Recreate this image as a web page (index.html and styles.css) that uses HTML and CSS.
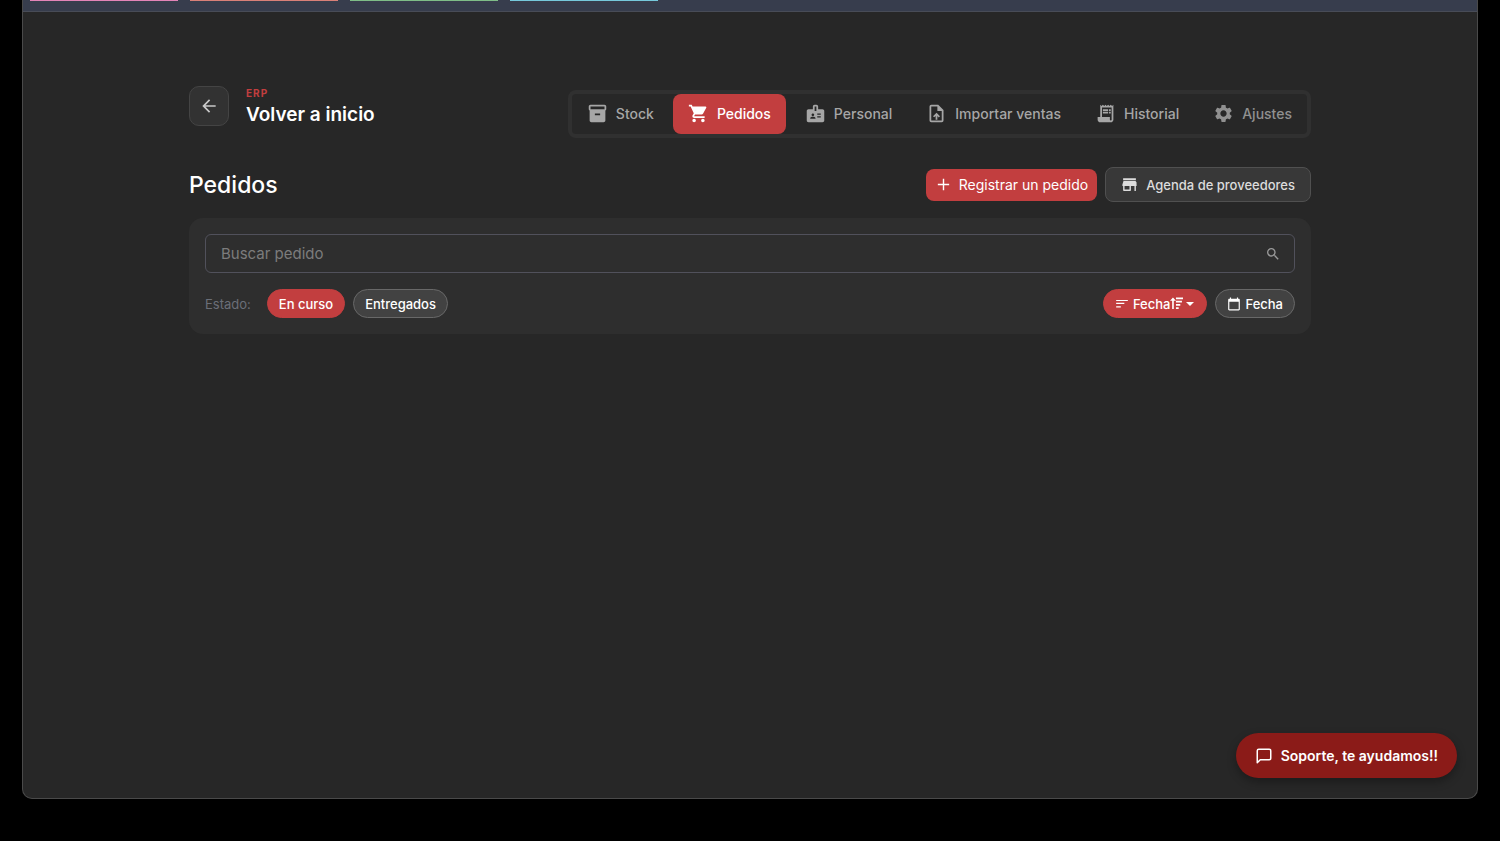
FILE: index.html
```html
<!DOCTYPE html>
<html lang="es">
  <head>
    <meta charset="UTF-8" />
    <meta name="viewport" content="width=device-width, initial-scale=1.0" />
    <title>Pedidos</title>
    <link rel="stylesheet" href="styles.css">
  </head>
  <body>
    <div class="window">
      <div class="topbar">
        <div class="tab pink"></div>
        <div class="tab orange"></div>
        <div class="tab green"></div>
        <div class="tab blue"></div>
      </div>

      <main class="container">
        <header class="header">
          <div class="back">
            <button class="back-btn" type="button" aria-label="Volver a inicio">
              <svg viewBox="0 0 24 24"><path d="M20 11H7.8l5.6-5.6L12 4l-8 8 8 8 1.4-1.4L7.8 13H20z" /></svg>
            </button>
            <div>
              <p class="label">ERP</p>
              <h2 class="back-title">Volver a inicio</h2>
            </div>
          </div>

          <nav class="nav">
            <a href="#stock">
              <svg viewBox="0 0 24 24"><path d="M20 2H4c-1 0-2 .9-2 2v3.01c0 .72.43 1.34 1 1.69V20c0 1.1 1.1 2 2 2h14c.9 0 2-.9 2-2V8.700c.57-.35 1-.97 1-1.690V4c0-1.100-1-2-2-2zm-5 12H9v-2h6v2zm5-7H4V4h16v3z" /></svg>
              Stock
            </a>
            <a href="#pedidos" class="active">
              <svg viewBox="0 0 24 24"><path d="M7 18c-1.100 0-1.990.9-1.990 2S5.900 22 7 22s2-.9 2-2-.9-2-2-2zM1 2v2h2l3.600 7.590-1.350 2.450c-.16.280-.25.610-.25.960 0 1.100.9 2 2 2h12v-2H7.420c-.14 0-.25-.11-.25-.25l.03-.12.9-1.630h7.450c.75 0 1.410-.41 1.750-1.030l3.580-6.490c.08-.14.120-.31.120-.48 0-.55-.45-1-1-1H5.210l-.94-2H1zm16 16c-1.100 0-1.990.9-1.990 2s.89 2 1.990 2 2-.9 2-2-.9-2-2-2z" /></svg>
              Pedidos
            </a>
            <a href="#personal">
              <svg viewBox="0 0 24 24"><path fill-rule="evenodd" d="M20 7h-5V4c0-1.100-.9-2-2-2h-2c-1.100 0-2 .9-2 2v3H4c-1.100 0-2 .9-2 2v11c0 1.100.9 2 2 2h16c1.100 0 2-.9 2-2V9c0-1.100-.9-2-2-2zM9 12c.83 0 1.500.67 1.500 1.500S9.830 15 9 15s-1.500-.67-1.500-1.500S8.170 12 9 12zm3 6H6v-.75c0-1 2-1.500 3-1.500s3 .5 3 1.500V18zm1-9h-2V4h2v5zm5 7.500h-4V15h4v1.500zm0-3h-4V12h4v1.500z" /></svg>
              Personal
            </a>
            <a href="#importar">
              <svg viewBox="0 0 24 24"><path fill-rule="evenodd" d="M14 2H6a2 2 0 0 0-2 2v16a2 2 0 0 0 2 2h12a2 2 0 0 0 2-2V8zM18 20H6V4h7v5h5zM8 15.010l1.410 1.410L11 14.840V19h2v-4.160l1.590 1.590L16 15.010 12.010 11z" /></svg>
              Importar ventas
            </a>
            <a href="#historial">
              <svg viewBox="0 0 24 24"><path fill-rule="evenodd" d="M19.500 3.500 18 2l-1.500 1.500L15 2l-1.500 1.500L12 2l-1.500 1.500L9 2 7.500 3.500 6 2v14H3v3c0 1.660 1.340 3 3 3h12c1.660 0 3-1.340 3-3V2zM19 19c0 .55-.45 1-1 1s-1-.45-1-1v-3H8V5h11zM9 7h6v2H9zM16 7h2v2h-2zM9 10h6v2H9zM16 10h2v2h-2z" /></svg>
              Historial
            </a>
            <a href="#ajustes" class="dim">
              <svg viewBox="0 0 24 24"><path d="M19.140 12.940c.04-.3.060-.61.060-.94 0-.32-.02-.64-.07-.94l2.030-1.580c.18-.14.230-.41.120-.61l-1.920-3.320c-.12-.22-.37-.29-.59-.22l-2.390.96c-.5-.38-1.030-.7-1.620-.94l-.36-2.540c-.04-.24-.24-.41-.48-.41h-3.840c-.24 0-.43.170-.47.410l-.36 2.540c-.59.240-1.130.570-1.620.940l-2.390-.96c-.22-.08-.47 0-.59.220L2.740 8.870c-.12.210-.08.470.12.610l2.030 1.580c-.05.300-.09.630-.09.940s.02.640.070.940l-2.030 1.580c-.18.140-.23.410-.12.610l1.920 3.320c.12.220.37.290.59.220l2.390-.96c.5.380 1.030.7 1.620.94l.36 2.540c.05.240.24.410.48.410h3.840c.24 0 .44-.17.470-.41l.36-2.540c.59-.24 1.130-.56 1.620-.94l2.390.96c.22.080.47 0 .59-.22l1.920-3.320c.12-.22.070-.47-.12-.61l-2.010-1.580zM12 15.600c-1.980 0-3.600-1.620-3.600-3.600s1.620-3.600 3.600-3.600 3.600 1.620 3.600 3.600-1.620 3.600-3.600 3.600z" /></svg>
              Ajustes
            </a>
          </nav>
        </header>

        <div class="title-row">
          <h1>Pedidos</h1>
          <div class="actions">
            <button class="btn-red" type="button">
              <svg viewBox="0 0 24 24"><path d="M20 13h-7v7h-2v-7H4v-2h7V4h2v7h7z" /></svg>
              Registrar un pedido
            </button>
            <button class="btn-dark" type="button">
              <svg viewBox="0 0 24 24"><path d="M21.900 8.890 20.490 7H3.510L2 12v2h1v6c0 .55.45 1 1 1h9c.55 0 1-.45 1-1v-6h5v7h2v-7h1v-2zM12 19H5v-5h7zM3 3h18v3H3z" /></svg>
              Agenda de proveedores
            </button>
          </div>
        </div>

        <section class="filters">
          <div class="search">
            <input type="text" id="buscar" aria-label="Buscar pedido" placeholder="Buscar pedido" />
            <svg viewBox="0 0 24 24"><path d="M15.500 14h-.79l-.28-.27A6.470 6.470 0 0 0 16 9.500 6.500 6.500 0 1 0 9.500 16c1.610 0 3.090-.59 4.230-1.570l.27.280v.79l5 4.990L20.490 19zm-6 0C7.010 14 5 11.990 5 9.500S7.010 5 9.500 5 14 7.010 14 9.500 11.990 14 9.500 14z" /></svg>
          </div>

          <div class="filter-row">
            <div class="chips">
              <span class="estado">Estado:</span>
              <button class="chip chip-red" type="button">En curso</button>
              <button class="chip" type="button">Entregados</button>
            </div>
            <div class="chips">
              <button class="chip chip-red" type="button">
                <svg class="sort" viewBox="0 0 24 24"><path d="M2 18h8v-2H2zM2 5v2h20V5zm0 5v2h14v-2z" /></svg>
                <span>Fecha</span>
                <svg class="order" viewBox="0 0 24 24"><path d="M4 22V7H0l5.500-6L11 7H7v15zM11 1h13v3H11zM11 7h11v3H11zM11 13h8v3h-8zM11 19h5v3h-5z" /></svg>
                <svg class="caret" viewBox="0 0 10 10"><path d="M1 3h8L5 7z" /></svg>
              </button>
              <button class="chip" type="button">
                <svg class="calendar" viewBox="0 0 24 24"><path fill-rule="evenodd" d="M20 3h-1V1h-2v2H7V1H5v2H4c-1.100 0-2 .9-2 2v16c0 1.100.9 2 2 2h16c1.100 0 2-.9 2-2V5c0-1.100-.9-2-2-2zm0 18H4V8h16z" /></svg>
                <span>Fecha</span>
              </button>
            </div>
          </div>
        </section>
      </main>

      <button class="support" type="button">
        <svg viewBox="0 0 24 24"><path d="M21 15a2 2 0 0 1-2 2H7l-4 4V5a2 2 0 0 1 2-2h14a2 2 0 0 1 2 2z" /></svg>
        Soporte, te ayudamos!!
      </button>
    </div>
  </body>
</html>
```
FILE: styles.css
```css
* {
  box-sizing: border-box;
}
body {
  margin: 0;
  height: 100vh;
  padding: 0 22px 42px;
  background: #000;
  color: #fff;
  font-family: Inter, "Liberation Sans", sans-serif;
}
h1,
h2,
p {
  margin: 0;
}
button,
input {
  font-family: inherit;
}
button {
  display: flex;
  align-items: center;
  justify-content: center;
  border: none;
  padding: 0;
  color: #fff;
  white-space: nowrap;
  cursor: pointer;
}
svg {
  fill: currentColor;
  flex-shrink: 0;
}

.window {
  position: relative;
  height: 100%;
  background: #272727;
  border: 1px solid #4a4a4a;
  border-top: none;
  border-radius: 0 0 10px 10px;
}
.topbar {
  display: flex;
  gap: 12px;
  height: 12px;
  padding: 0 7px;
  background: #373d4d;
  border-bottom: 1px solid #484c57;
}
.tab {
  width: 148px;
  height: 1px;
}
.pink {
  background: #e284b8;
}
.orange {
  background: #d98078;
}
.green {
  background: #7fbd88;
}
.blue {
  background: #76c9dc;
}

.container {
  max-width: 1122px;
  margin: 0 auto;
  padding-top: 74px;
}
.header {
  display: flex;
  justify-content: space-between;
  align-items: flex-start;
}
.back {
  display: flex;
  gap: 17px;
}
.back-btn {
  width: 40px;
  height: 40px;
  background: #323232;
  border: 1px solid #444;
  border-radius: 10px;
  color: #c8c8c8;
}
.back-btn svg {
  width: 20px;
  height: 20px;
}
.label {
  color: #c23e3f;
  font-size: 10px;
  line-height: 14px;
  font-weight: 700;
  letter-spacing: 1px;
}
.back-title {
  font-size: 19px;
  line-height: 30px;
  font-weight: 600;
}

.nav {
  display: flex;
  gap: 4px;
  margin-top: 4px;
  border: 4px solid #303030;
  border-radius: 8px;
}
.nav a {
  display: flex;
  align-items: center;
  gap: 8px;
  height: 40px;
  padding: 0 15px 1px;
  border-radius: 8px;
  color: #a6a6a6;
  font-size: 14px;
  font-weight: 500;
  text-decoration: none;
  white-space: nowrap;
}
.nav svg {
  width: 21px;
  height: 21px;
}
.nav .active {
  background: #c23e3f;
  color: #fff;
}
.nav .dim {
  color: #909090;
}

.title-row {
  display: flex;
  justify-content: space-between;
  align-items: center;
  margin-top: 29px;
}
h1 {
  font-size: 23px;
  line-height: 32px;
  font-weight: 500;
}
.actions {
  display: flex;
  align-items: center;
  gap: 8px;
}
.btn-red,
.btn-dark {
  border-radius: 8px;
}
.btn-red {
  gap: 7px;
  height: 32px;
  padding: 0 9px;
  background: #c23e3f;
  font-size: 14px;
}
.btn-dark {
  gap: 8px;
  height: 35px;
  padding: 0 15px;
  background: #383838;
  border: 1px solid #505050;
  color: #dcdcdc;
  font-size: 13px;
  font-weight: 500;
}
.actions svg {
  width: 17px;
  height: 17px;
}

.filters {
  margin-top: 16px;
  padding: 16px;
  background: #2e2e2e;
  border-radius: 14px;
}
.search {
  display: flex;
  align-items: center;
  height: 39px;
  padding: 0 13px 0 15px;
  border: 1px solid #51515b;
  border-radius: 6px;
  color: #9a9a9a;
}
.search input {
  flex: 1;
  padding: 0;
  background: none;
  border: none;
  outline: none;
  color: #fff;
  font-size: 15px;
}
.search input::placeholder {
  color: #7c7c7c;
}
.search svg {
  width: 16px;
  height: 16px;
}
.filter-row {
  display: flex;
  justify-content: space-between;
  margin-top: 16px;
}
.chips {
  display: flex;
  align-items: center;
  gap: 8px;
}
.estado {
  margin-right: 8px;
  color: #6b6f78;
  font-size: 13px;
}
.chip {
  height: 29px;
  padding: 0 11px;
  background: #424242;
  border: 1px solid #686868;
  border-radius: 15px;
  font-size: 13px;
  font-weight: 500;
}
.chip-red {
  background: #c23e3f;
  border-color: #c23e3f;
}
.sort {
  width: 14px;
  height: 14px;
  margin-right: 4px;
}
.order {
  width: 13px;
  height: 13px;
}
.caret {
  width: 10px;
  height: 10px;
  margin-left: 2px;
}
.calendar {
  width: 14px;
  height: 14px;
  margin-right: 4px;
}

/* floating support button */
.support {
  position: absolute;
  right: 20px;
  bottom: 20px;
  gap: 8px;
  height: 45px;
  padding: 0 19px;
  background: #8b1b18;
  border-radius: 23px;
  box-shadow: 0 4px 10px rgba(0, 0, 0, 0.3);
  font-size: 14px;
  font-weight: 600;
}
.support svg {
  width: 18px;
  height: 18px;
  fill: none;
  stroke: currentColor;
  stroke-width: 2;
  stroke-linecap: round;
  stroke-linejoin: round;
}
```
